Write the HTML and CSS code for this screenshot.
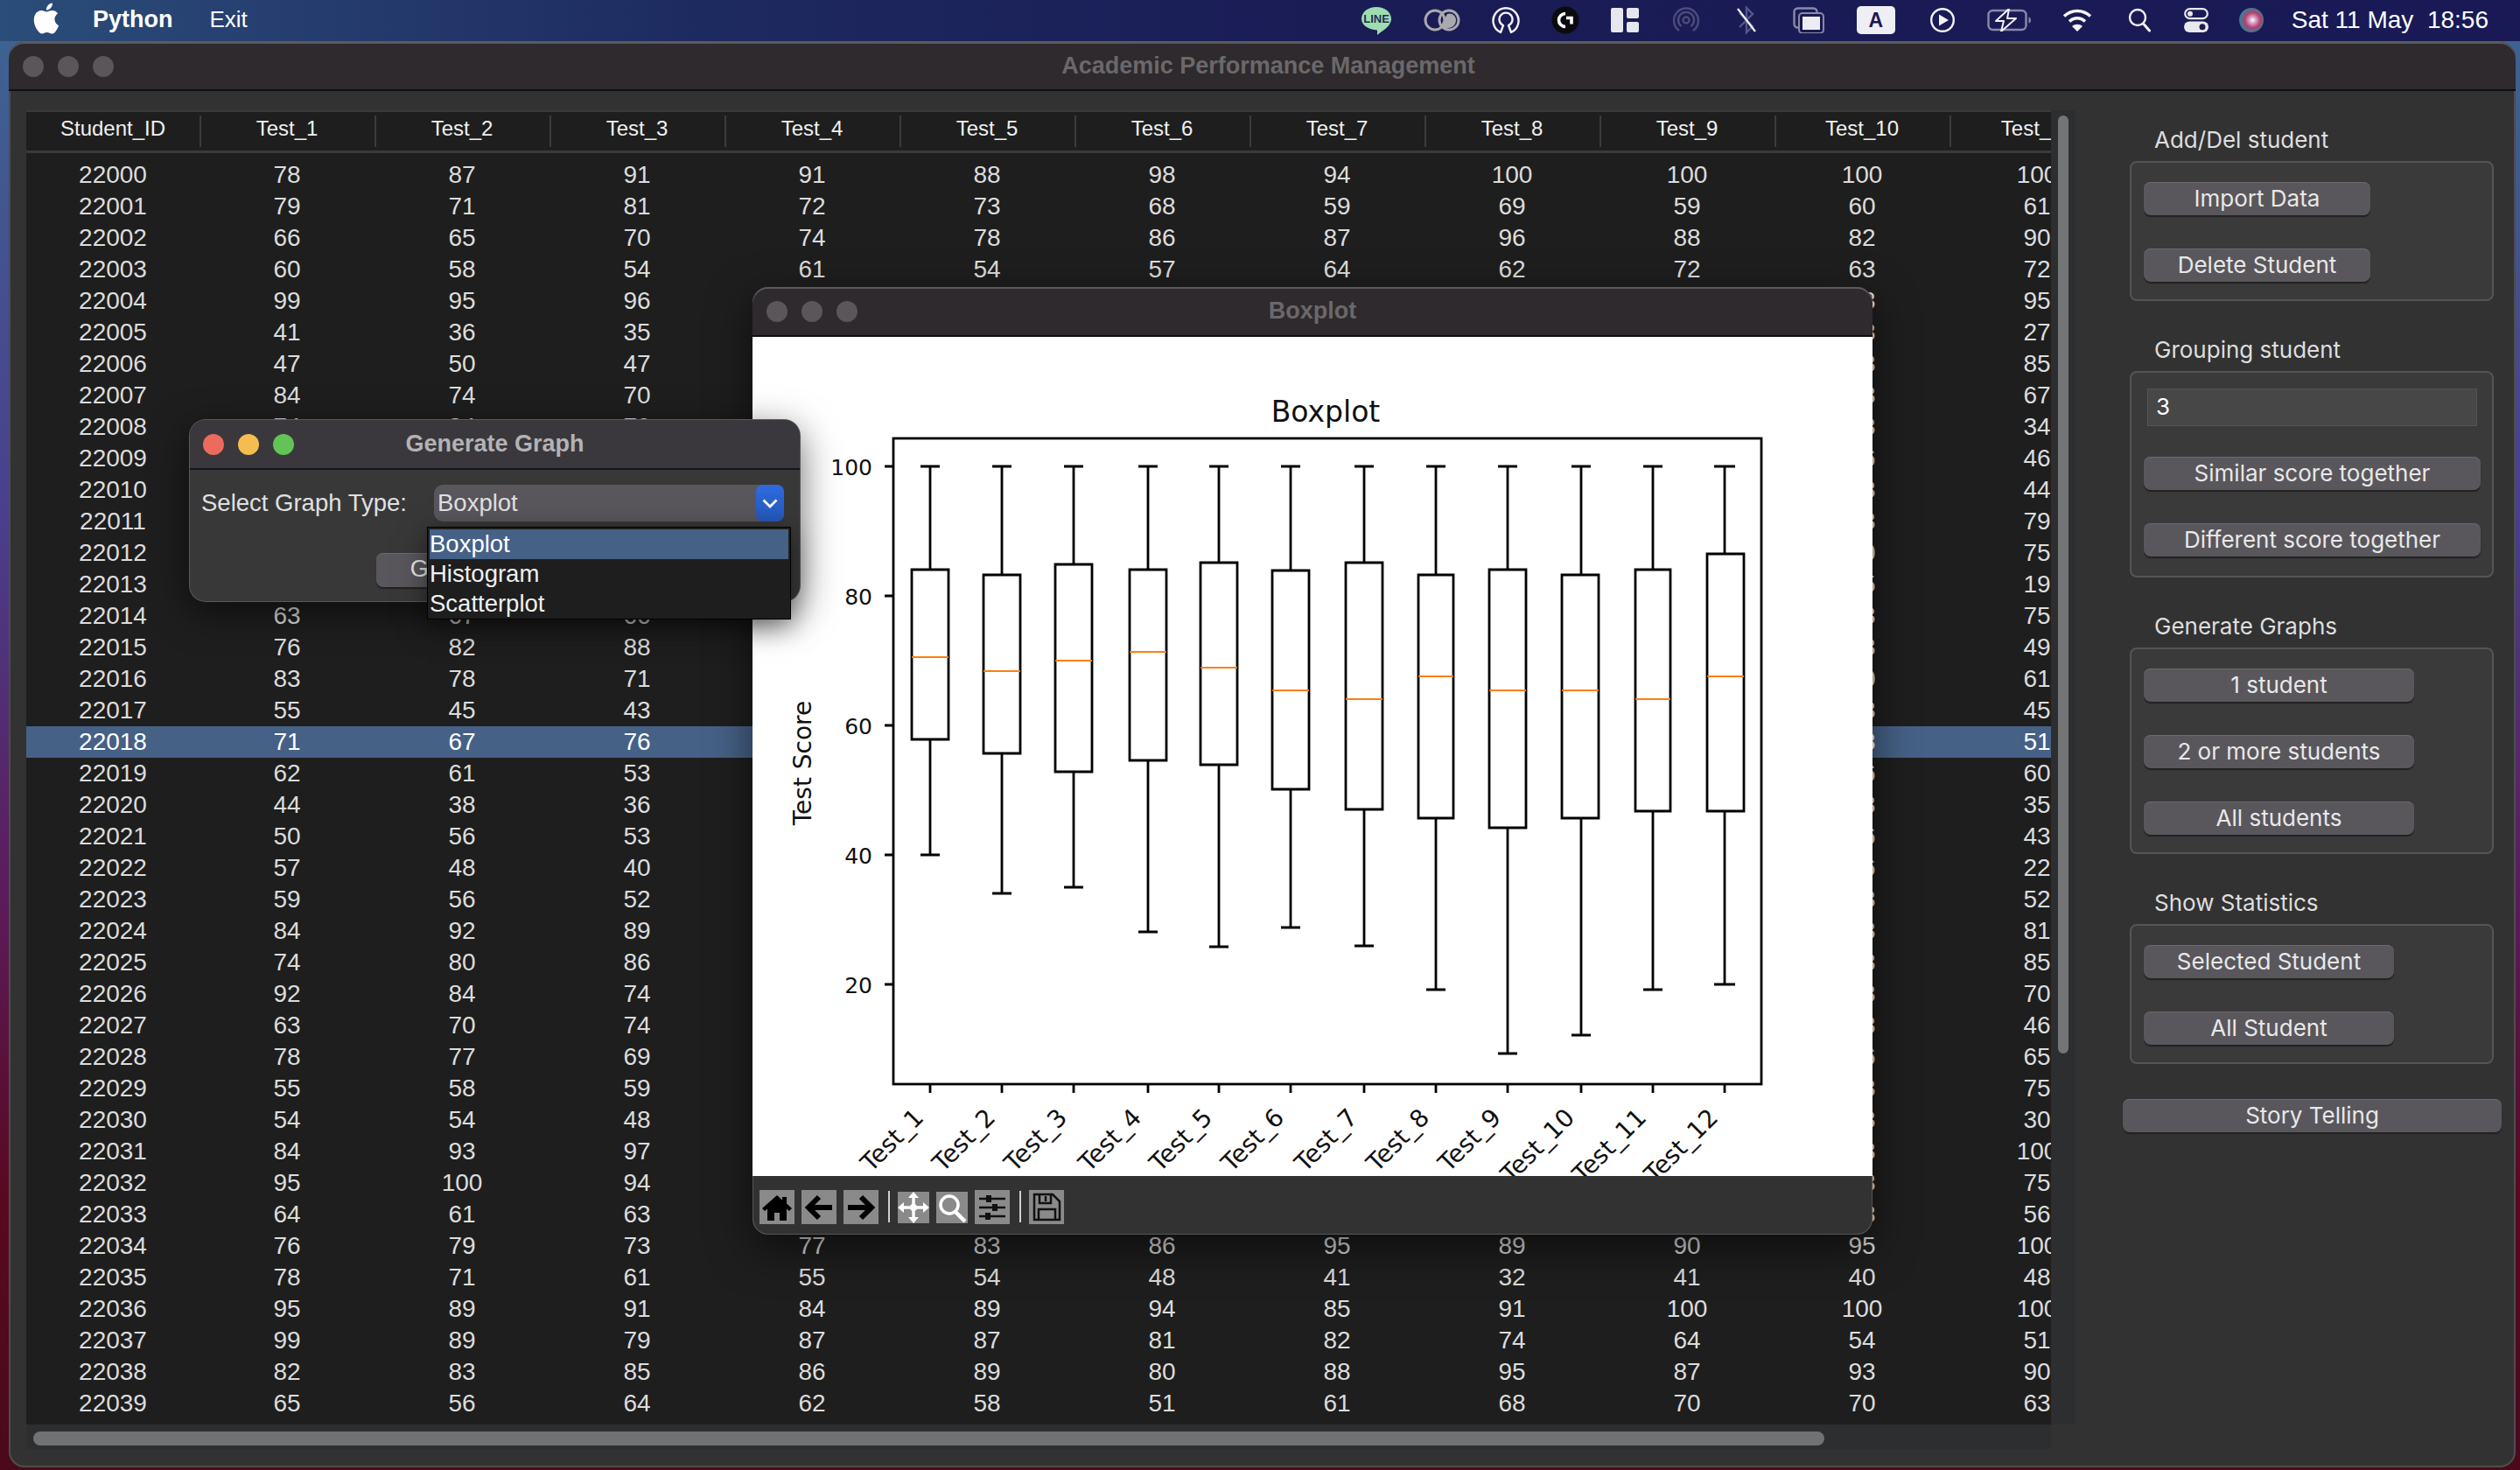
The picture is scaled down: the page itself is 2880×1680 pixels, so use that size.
FILE: index.html
```html
<!DOCTYPE html>
<html lang="en">
<head>
<meta charset="utf-8">
<title>Academic Performance Management</title>
<link rel="stylesheet" href="styles.css">
</head>
<body>
<header class="menubar">
  <svg class="apple" viewBox="0 0 24 24"><path fill="#fff" d="M18.71 19.5c-.83 1.24-1.71 2.45-3.05 2.47-1.34.03-1.77-.79-3.29-.79-1.53 0-2 .77-3.27.82-1.31.05-2.3-1.32-3.14-2.53C4.25 17 2.94 12.45 4.7 9.39c.87-1.52 2.43-2.48 4.12-2.51 1.28-.02 2.5.87 3.29.87.78 0 2.26-1.07 3.8-.91.65.03 2.47.26 3.64 1.98-.09.06-2.17 1.28-2.15 3.81.03 3.02 2.65 4.03 2.68 4.04-.03.07-.42 1.44-1.38 2.83M13 3.5c.73-.83 1.94-1.46 2.94-1.5.13 1.17-.34 2.35-1.04 3.19-.69.85-1.83 1.51-2.95 1.42-.15-1.15.41-2.35 1.05-3.11z"/></svg>
  <span class="menu-app">Python</span>
  <span class="menu-item">Exit</span>
  <div class="status">
    <svg width="36" height="36" viewBox="0 0 36 36"><path fill="#9fdcb0" d="M18 3c9.400 0 17 5.800 17 13.500 0 6.500-6 11.500-13 16l-3 2.500v-5.600C9 29 1 23.800 1 16.500 1 8.800 8.600 3 18 3z"/><text class="line-txt" x="18" y="21" text-anchor="middle">LINE</text></svg>
    <svg width="42" height="32" viewBox="0 0 42 32"><g fill="none" stroke="#a9a9ae" stroke-width="3"><circle cx="13" cy="16" r="11"/><circle cx="29" cy="16" r="11"/></g><path fill="#a9a9ae" d="M18 25 27 9c5-2 10 2 10 7s-4 9-9 9z"/></svg>
    <svg width="32" height="34" viewBox="0 0 32 34"><path fill="none" stroke="#f2f2f6" stroke-width="2.400" stroke-linejoin="round" d="M10 31A14.500 14.500 0 1 1 22 31L19 23A7.500 7.500 0 1 0 13 23Z"/></svg>
    <svg width="32" height="32" viewBox="0 0 32 32"><circle cx="16" cy="16" r="15.500" fill="#0b0b0f"/><path fill="none" stroke="#fff" stroke-width="3.600" d="M16 8.500a7.500 7.500 0 0 0 0 15M17 13.500h6v7"/></svg>
    <svg width="32" height="28" viewBox="0 0 32 28"><g fill="#e6e6ee"><rect width="14" height="28" rx="2"/><rect x="18" width="14" height="12" rx="2"/><rect x="18" y="16" width="14" height="12" rx="2"/></g></svg>
    <svg width="30" height="32" viewBox="0 0 30 32"><g fill="none" stroke="#4c4c7c" stroke-width="2.400"><path d="M7 28A14 14 0 1 1 23 28"/><path d="M9.500 23A9 9 0 1 1 20.500 23"/><circle cx="15" cy="16" r="3.500"/></g></svg>
    <svg width="24" height="34" viewBox="0 0 24 34"><path fill="none" stroke="#55568a" stroke-width="2.400" d="M4 9l15 15-7 7V3l7 7L4 25"/><path stroke="#f2f2f6" stroke-width="2.200" d="M2 4l20 26"/></svg>
    <svg width="36" height="30" viewBox="0 0 36 30"><rect x="1.500" y="1.500" width="26" height="22" rx="4" fill="none" stroke="#8989aa" stroke-width="2.400"/><rect x="7" y="7" width="28" height="23" rx="4" fill="#1a1a50" stroke="#8989aa" stroke-width="2"/><rect x="11" y="11" width="20" height="15" fill="#ececf2"/></svg>
    <span class="input-badge">A</span>
    <svg width="30" height="30" viewBox="0 0 30 30"><circle cx="15" cy="15" r="12.800" fill="none" stroke="#f2f2f6" stroke-width="2.400"/><path fill="#f2f2f6" d="M11 8.500l11 6.500-11 6.500z"/></svg>
    <svg width="52" height="26" viewBox="0 0 52 26"><rect x="1.500" y="2" width="43" height="22" rx="5" fill="none" stroke="#8989aa" stroke-width="2.400"/><path fill="#8989aa" d="M47.500 9.500c2 .6 2.500 2 2.500 3.500s-.5 3-2.500 3.500z"/><path fill="#1a1a50" stroke="#f2f2f6" stroke-width="2" stroke-linejoin="round" d="M25 0L10 14h9l-3 12 17-15h-10z"/></svg>
    <svg width="34" height="28" viewBox="0 0 34 28"><g fill="none" stroke="#f6f6fa" stroke-width="3.600"><path d="M2 9.500C11 1.500 23 1.500 32 9.500"/><path d="M8 15.500c5.500-5 12.500-5 18 0"/></g><path fill="#f6f6fa" d="M17 27l-6-6c3.500-3 8.500-3 12 0z"/></svg>
    <svg width="26" height="28" viewBox="0 0 26 28"><circle cx="11" cy="11" r="9" fill="none" stroke="#f2f2f6" stroke-width="2.400"/><path stroke="#f2f2f6" stroke-width="3" stroke-linecap="round" d="M17.500 18l7 8"/></svg>
    <svg width="28" height="28" viewBox="0 0 28 28"><rect x="1.200" y="1.200" width="25.600" height="11" rx="5.500" fill="none" stroke="#e8e8ee" stroke-width="2.200"/><circle cx="7" cy="6.700" r="3" fill="#e8e8ee"/><rect y="15.500" width="28" height="12.500" rx="6.200" fill="#e8e8ee"/><circle cx="21" cy="21.700" r="3.500" fill="#1a1a50"/></svg>
    <svg width="28" height="28" viewBox="0 0 28 28"><defs><radialGradient id="siri" cx=".55" cy=".5" r=".62"><stop offset="0" stop-color="#fff"/><stop offset=".22" stop-color="#d8a0c8"/><stop offset=".5" stop-color="#b5406e"/><stop offset=".8" stop-color="#3d7d96"/><stop offset="1" stop-color="#3b5f8c"/></radialGradient></defs><circle cx="14" cy="14" r="14" fill="url(#siri)"/></svg>
  </div>
  <time class="clock">Sat 11 May&nbsp; 18:56</time>
</header>

<section class="window main-window">
  <div class="titlebar">
    <div class="lights"><i></i><i></i><i></i></div>
    <h1 class="title main-title">Academic Performance Management</h1>
  </div>
  <div class="main-body">
    <div class="data-area">
      <div class="data-top">
        <div class="table-clip">
          <table class="grades">
            <thead>
              <tr><th>Student_ID<th>Test_1<th>Test_2<th>Test_3<th>Test_4<th>Test_5<th>Test_6<th>Test_7<th>Test_8<th>Test_9<th>Test_10<th>Test_11
            </thead>
            <tbody>
              <tr class="gap"><td colspan="12">
              <tr><td>22000<td>78<td>87<td>91<td>91<td>88<td>98<td>94<td>100<td>100<td>100<td>100
              <tr><td>22001<td>79<td>71<td>81<td>72<td>73<td>68<td>59<td>69<td>59<td>60<td>61
              <tr><td>22002<td>66<td>65<td>70<td>74<td>78<td>86<td>87<td>96<td>88<td>82<td>90
              <tr><td>22003<td>60<td>58<td>54<td>61<td>54<td>57<td>64<td>62<td>72<td>63<td>72
              <tr><td>22004<td>99<td>95<td>96<td colspan="6"><td>93<td>95
              <tr><td>22005<td>41<td>36<td>35<td colspan="6"><td>38<td>27
              <tr><td>22006<td>47<td>50<td>47<td colspan="6"><td>63<td>85
              <tr><td>22007<td>84<td>74<td>70<td colspan="6"><td>68<td>67
              <tr><td>22008<td>74<td>84<td>79<td colspan="6"><td>43<td>34
              <tr><td>22009<td colspan="9"><td>56<td>46
              <tr><td>22010<td colspan="9"><td>48<td>44
              <tr><td>22011<td colspan="9"><td>83<td>79
              <tr><td>22012<td colspan="9"><td>70<td>75
              <tr><td>22013<td colspan="9"><td>25<td>19
              <tr><td>22014<td>63<td>67<td>66<td colspan="6"><td>73<td>75
              <tr><td>22015<td>76<td>82<td>88<td colspan="6"><td>53<td>49
              <tr><td>22016<td>83<td>78<td>71<td colspan="6"><td>60<td>61
              <tr><td>22017<td>55<td>45<td>43<td colspan="6"><td>48<td>45
              <tr class="selected"><td>22018<td>71<td>67<td>76<td colspan="6"><td>58<td>51
              <tr><td>22019<td>62<td>61<td>53<td colspan="6"><td>56<td>60
              <tr><td>22020<td>44<td>38<td>36<td colspan="6"><td>33<td>35
              <tr><td>22021<td>50<td>56<td>53<td colspan="6"><td>46<td>43
              <tr><td>22022<td>57<td>48<td>40<td colspan="6"><td>26<td>22
              <tr><td>22023<td>59<td>56<td>52<td colspan="6"><td>53<td>52
              <tr><td>22024<td>84<td>92<td>89<td colspan="6"><td>83<td>81
              <tr><td>22025<td>74<td>80<td>86<td colspan="6"><td>88<td>85
              <tr><td>22026<td>92<td>84<td>74<td colspan="6"><td>73<td>70
              <tr><td>22027<td>63<td>70<td>74<td colspan="6"><td>48<td>46
              <tr><td>22028<td>78<td>77<td>69<td colspan="6"><td>66<td>65
              <tr><td>22029<td>55<td>58<td>59<td colspan="6"><td>73<td>75
              <tr><td>22030<td>54<td>54<td>48<td colspan="6"><td>33<td>30
              <tr><td>22031<td>84<td>93<td>97<td colspan="6"><td>98<td>100
              <tr><td>22032<td>95<td>100<td>94<td colspan="6"><td>78<td>75
              <tr><td>22033<td>64<td>61<td>63<td colspan="6"><td>58<td>56
              <tr><td>22034<td>76<td>79<td>73<td>77<td>83<td>86<td>95<td>89<td>90<td>95<td>100
              <tr><td>22035<td>78<td>71<td>61<td>55<td>54<td>48<td>41<td>32<td>41<td>40<td>48
              <tr><td>22036<td>95<td>89<td>91<td>84<td>89<td>94<td>85<td>91<td>100<td>100<td>100
              <tr><td>22037<td>99<td>89<td>79<td>87<td>87<td>81<td>82<td>74<td>64<td>54<td>51
              <tr><td>22038<td>82<td>83<td>85<td>86<td>89<td>80<td>88<td>95<td>87<td>93<td>90
              <tr><td>22039<td>65<td>56<td>64<td>62<td>58<td>51<td>61<td>68<td>70<td>70<td>63
            </tbody>
          </table>
        </div>
        <div class="vtrack"><div class="vthumb"></div></div>
      </div>
      <div class="htrack"><div class="hthumb"></div></div>
    </div>

    <aside class="panel">
      <div class="group">
        <h2 class="group-title">Add/Del student</h2>
        <div class="group-box w-add">
          <button class="btn">Import Data</button>
          <button class="btn">Delete Student</button>
        </div>
      </div>
      <div class="group">
        <h2 class="group-title">Grouping student</h2>
        <div class="group-box w-grouping">
          <input class="field" type="text" value="3">
          <button class="btn">Similar score together</button>
          <button class="btn">Different score together</button>
        </div>
      </div>
      <div class="group">
        <h2 class="group-title">Generate Graphs</h2>
        <div class="group-box w-graphs">
          <button class="btn">1 student</button>
          <button class="btn">2 or more students</button>
          <button class="btn">All students</button>
        </div>
      </div>
      <div class="group">
        <h2 class="group-title">Show Statistics</h2>
        <div class="group-box w-stats">
          <button class="btn">Selected Student</button>
          <button class="btn">All Student</button>
        </div>
      </div>
      <button class="btn story">Story Telling</button>
    </aside>
  </div>
</section>

<section class="window plot-window">
  <div class="titlebar plot-bar">
    <div class="lights"><i></i><i></i><i></i></div>
    <h1 class="title">Boxplot</h1>
  </div>
  <svg class="canvas" viewBox="860 385 1280 959" width="1280" height="959">
    <g class="ax" fill="none" stroke="#000" stroke-width="2.800">
      <rect x="1021" y="501" width="992" height="738"/>
      <path d="M1011 533h10M1011 681h10M1011 829h10M1011 977h10M1011 1125h10"/>
      <path d="M1063 1239v10M1145 1239v10M1227 1239v10M1312 1239v10M1393 1239v10M1475 1239v10M1559 1239v10M1641 1239v10M1723 1239v10M1807 1239v10M1889 1239v10M1971 1239v10"/>
      <path d="M1063 533V651M1063 845V977M1052 533h22M1052 977h22M1042 651h42V845h-42Z"/>
      <path d="M1145 533V657M1145 861V1021M1134 533h22M1134 1021h22M1124 657h42V861h-42Z"/>
      <path d="M1227 533V645M1227 882V1014M1216 533h22M1216 1014h22M1206 645h42V882h-42Z"/>
      <path d="M1312 533V651M1312 869V1065M1301 533h22M1301 1065h22M1291 651h42V869h-42Z"/>
      <path d="M1393 533V643M1393 874V1082M1382 533h22M1382 1082h22M1372 643h42V874h-42Z"/>
      <path d="M1475 533V652M1475 902V1060M1464 533h22M1464 1060h22M1454 652h42V902h-42Z"/>
      <path d="M1559 533V643M1559 925V1081M1548 533h22M1548 1081h22M1538 643h42V925h-42Z"/>
      <path d="M1641 533V657M1641 935V1131M1630 533h22M1630 1131h22M1621 657h40V935h-40Z"/>
      <path d="M1723 533V651M1723 946V1204M1712 533h22M1712 1204h22M1702 651h42V946h-42Z"/>
      <path d="M1807 533V657M1807 935V1183M1796 533h22M1796 1183h22M1785 657h42V935h-42Z"/>
      <path d="M1889 533V651M1889 927V1131M1878 533h22M1878 1131h22M1869 651h40V927h-40Z"/>
      <path d="M1971 533V633M1971 927V1125M1959 533h24M1959 1125h24M1951 633h42V927h-42Z"/>
    </g>
    <path fill="none" stroke="#ff7f0e" stroke-width="2.200" d="M1042 751h42M1124 767h42M1206 755h42M1291 745h42M1372 763h42M1454 789h42M1538 799h42M1621 773h40M1702 789h42M1785 789h42M1869 799h40M1951 773h42"/>
    <text class="plot-title" x="1515" y="482" text-anchor="middle">Boxplot</text>
    <g class="tick-text" text-anchor="end">
      <text x="997" y="543">100</text><text x="997" y="691">80</text><text x="997" y="839">60</text><text x="997" y="987">40</text><text x="997" y="1135">20</text>
    </g>
    <g class="plot-text" text-anchor="end">
      <text transform="translate(1057 1279) rotate(-45)">Test_1</text>
      <text transform="translate(1139 1279) rotate(-45)">Test_2</text>
      <text transform="translate(1221 1279) rotate(-45)">Test_3</text>
      <text transform="translate(1306 1279) rotate(-45)">Test_4</text>
      <text transform="translate(1387 1279) rotate(-45)">Test_5</text>
      <text transform="translate(1469 1279) rotate(-45)">Test_6</text>
      <text transform="translate(1553 1279) rotate(-45)">Test_7</text>
      <text transform="translate(1635 1279) rotate(-45)">Test_8</text>
      <text transform="translate(1717 1279) rotate(-45)">Test_9</text>
      <text transform="translate(1801 1279) rotate(-45)">Test_10</text>
      <text transform="translate(1883 1279) rotate(-45)">Test_11</text>
      <text transform="translate(1965 1279) rotate(-45)">Test_12</text>
    </g>
    <text class="plot-text" text-anchor="middle" transform="translate(927 872) rotate(-90)">Test Score</text>
  </svg>
  <div class="toolbar">
    <svg class="tool" width="40" height="39" viewBox="0 0 40 39"><rect width="40" height="39" fill="#8a8a8a"/><path fill="#000" d="M20 6 3 21l3 3 3-2.500V35h8v-9h6v9h8V21.500l3 2.500 3-3-6-5.500V8h-5v3.500z"/></svg>
    <svg class="tool" width="40" height="39" viewBox="0 0 40 39"><rect width="40" height="39" fill="#8a8a8a"/><path fill="none" stroke="#000" stroke-width="6" d="M35 20H10M20 8 8 20l12 12"/></svg>
    <svg class="tool" width="40" height="39" viewBox="0 0 40 39"><rect width="40" height="39" fill="#8a8a8a"/><path fill="none" stroke="#000" stroke-width="6" d="M5 20h25M20 8l12 12-12 12"/></svg>
    <span class="tool-sep"></span>
    <svg class="tool tool-small" width="36" height="36" viewBox="0 0 36 36"><rect width="36" height="36" fill="#8a8a8a"/><path fill="none" stroke="#fff" stroke-width="3.500" d="M18 4v28M2 18h32"/><path fill="#fff" d="M18 0l6 7H12zM18 36l-6-7h12zM0 18l7-6v12zM36 18l-7 6V12z"/><circle cx="18" cy="18" r="4" fill="#fff"/></svg>
    <svg class="tool tool-small" width="36" height="36" viewBox="0 0 36 36"><rect width="36" height="36" fill="#8a8a8a"/><circle cx="15" cy="15" r="10" fill="none" stroke="#fff" stroke-width="3.500"/><path stroke="#fff" stroke-width="4.500" d="M22 23l11 11"/></svg>
    <svg class="tool" width="40" height="39" viewBox="0 0 40 39"><rect width="40" height="39" fill="#8a8a8a"/><path stroke="#111" stroke-width="2.500" d="M5 10h30M5 20h30M5 30h30"/><g fill="#111"><rect x="13" y="6" width="6" height="8"/><rect x="20" y="16" width="6" height="8"/><rect x="12" y="26" width="6" height="8"/></g></svg>
    <span class="tool-sep"></span>
    <svg class="tool" width="40" height="39" viewBox="0 0 40 39"><rect width="40" height="39" fill="#8a8a8a"/><path fill="none" stroke="#111" stroke-width="2.500" d="M6 5h21l8 8v21H6zM12 5v10h13V5M19 7v6M11 34V22h19v12"/></svg>
  </div>
</section>

<section class="window dialog">
  <div class="titlebar dialog-bar">
    <div class="lights active"><i class="red"></i><i class="amber"></i><i class="green"></i></div>
    <h1 class="title dialog-title">Generate Graph</h1>
  </div>
  <div class="dialog-body">
    <div class="select-row">
      <label class="select-label">Select Graph Type:</label>
      <div class="combo">
        <span class="combo-value">Boxplot</span>
        <span class="combo-arrow"><svg width="18" height="11" viewBox="0 0 18 11"><path fill="none" stroke="#fff" stroke-width="2.800" d="M1.500 1.500 9 9l7.500-7.500"/></svg></span>
      </div>
    </div>
    <button class="btn generate">Generate</button>
  </div>
  <ul class="dropdown">
    <li class="picked">Boxplot</li>
    <li>Histogram</li>
    <li>Scatterplot</li>
  </ul>
</section>
</body>
</html>
```

FILE: styles.css
```css
* { box-sizing: border-box; }
html, body { margin: 0; padding: 0; }
body {
  width: 2880px;
  height: 1680px;
  overflow: hidden;
  position: relative;
  background: linear-gradient(180deg, #3d6592 0, #4a3f8c 35%, #5c1a58 62%, #57091f 82%, #4a0a1c 100%);
  font-family: "Liberation Sans", Arial, sans-serif;
}

/* Menu bar */
.menubar {
  height: 47px;
  display: flex;
  align-items: center;
  padding: 0 36px 2px 0;
  color: #fff;
  background: linear-gradient(90deg, #2a4d79 0, #263f70 300px, #1d2a60 800px, #1a1c56 1500px, #191a55 100%);
}
.apple { width: 42px; height: 42px; margin-left: 32px; margin-top: -4px; }
.menu-app { font-weight: 700; font-size: 27px; margin-left: 32px; }
.menu-item { font-size: 26px; margin-left: 42px; }
.status {
  margin-left: auto;
  display: grid;
  grid-template-columns: 75px 75px 70px 66px 70px 70px 68px 75px 78px 75px 78px 76px 67px 63px 62px;
  justify-items: center;
  align-items: center;
}
.line-txt { font: 700 13px "Liberation Sans", sans-serif; fill: #1d2f52; }
.input-badge {
  width: 44px; height: 32px;
  border-radius: 5px;
  background: #eeeef4;
  color: #1a1a50;
  font-weight: 700;
  font-size: 23px;
  line-height: 32px;
  text-align: center;
}
.clock { font-size: 28px; margin-left: 15px; white-space: nowrap; }

/* Windows */
.window { position: absolute; border-radius: 18px; }
.titlebar {
  position: relative;
  height: 56px;
  display: flex;
  align-items: center;
  justify-content: center;
  background: #2e2a2d;
  border-bottom: 2px solid #0f0f0f;
  border-radius: 18px 18px 0 0;
  box-shadow: inset 0 2px 0 #5c5a5c;
}
.title {
  margin: 0;
  font-size: 27px;
  font-weight: 700;
  color: #6b686a;
}
.lights {
  position: absolute;
  left: 16px;
  top: 16px;
  display: flex;
  gap: 16px;
}
.lights i { width: 24px; height: 24px; border-radius: 50%; background: #5a565a; }
.lights .red { background: #ee6a5e; }
.lights .amber { background: #f5bd4f; }
.lights .green { background: #61c454; }

.main-window {
  left: 10px;
  top: 48px;
  width: 2865px;
  height: 1629px;
  background: #323232;
  box-shadow: inset 0 0 0 2px #4d4d4d;
}
.main-title { padding-left: 14px; }
.main-body { display: flex; padding: 22px 0 0 20px; }
.data-area { width: 2342px; }
.data-top { display: flex; height: 1502px; }
.table-clip { width: 2314px; overflow: hidden; background: #1e1e1e; }
.vtrack { width: 28px; background: #2d2e30; padding: 6px 8px 0; }
.vthumb { height: 1072px; border-radius: 8px; background: #737577; }
.htrack { width: 2314px; height: 28px; background: #2d2e30; padding: 8px 8px 0; }
.hthumb { width: 2047px; height: 16px; border-radius: 8px; background: #707274; }

/* Table */
.grades {
  table-layout: fixed;
  border-collapse: collapse;
  width: 2398px;
  color: #dcdcdc;
}
.grades th {
  width: 200px;
  height: 46px;
  padding: 0 0 6px;
  font-size: 24px;
  font-weight: 400;
  color: #f0f0f0;
  border-top: 2px solid #3a3a3a;
  border-bottom: 3px solid #3a3a3a;
  background: linear-gradient(#3c3c3c, #3c3c3c) left center / 2px 36px no-repeat;
}
.grades th:first-child { width: 198px; background: none; }
.grades td {
  height: 36px;
  padding: 0;
  font-size: 28px;
  line-height: 36px;
  text-align: center;
  white-space: nowrap;
}
.grades .gap td { height: 9px; line-height: 9px; font-size: 0; }
.grades .selected td { background: #456186; color: #fff; }

/* Side panel */
.panel {
  width: 503px;
  padding: 14px 0 0 62px;
  display: flex;
  flex-direction: column;
  gap: 36px;
  font-family: Inter, "Liberation Sans", sans-serif;
}
.group-title {
  margin: 0 0 4px 28px;
  height: 40px;
  line-height: 40px;
  font-size: 26px;
  font-weight: 400;
  color: #dedede;
}
.group-box {
  width: 416px;
  display: flex;
  flex-direction: column;
  align-items: flex-start;
  gap: 38px;
  padding: 22px 14px 20px;
  background: #3a3a3a;
  border: 2px solid #555;
  border-radius: 8px;
}
.btn {
  height: 38px;
  padding: 0 0 2px;
  border: 0;
  border-radius: 8px;
  background: #59575c;
  color: #e8e8e8;
  font: 400 26px Inter, "Liberation Sans", sans-serif;
  box-shadow: inset 0 1px 0 #6c6a6f, 0 2px 1px #222;
}
.w-add .btn { width: 259px; }
.w-grouping { padding-bottom: 22px; }
.w-grouping .btn { width: 385px; }
.w-graphs .btn { width: 309px; }
.w-stats .btn { width: 286px; }
.field {
  width: 377px;
  height: 43px;
  margin: -4px 0 -3px 4px;
  padding: 0 0 2px 9px;
  border: 1px solid #545454;
  background: #474747;
  color: #fff;
  font: 400 26px Inter, "Liberation Sans", sans-serif;
}
.story { width: 433px; margin: 4px 0 0 -8px; }

/* Plot window */
.plot-window {
  left: 860px;
  top: 328px;
  width: 1280px;
  height: 1083px;
  background: #323232;
  box-shadow: 0 16px 50px rgba(0,0,0,.55), inset 0 0 0 1px #555;
}
.plot-bar { height: 57px; }
.canvas { display: block; background: #fff; }
.plot-title { font: 33px "DejaVu Sans", sans-serif; fill: #111; }
.tick-text { font: 25px "DejaVu Sans", sans-serif; fill: #111; }
.plot-text { font: 28px "DejaVu Sans", sans-serif; fill: #111; }
.toolbar {
  height: 67px;
  display: flex;
  align-items: flex-start;
  gap: 8px;
  padding: 16px 0 0 8px;
}
.tool { display: block; }
.tool-small { margin-top: 2px; }
.tool-sep { width: 2px; height: 36px; margin: 1px 1px 0 3px; background: #cfcfcf; }

/* Dialog */
.dialog {
  left: 217px;
  top: 480px;
  width: 697px;
  height: 207px;
  background: #383838;
  box-shadow: 0 0 0 1px #5a5a5a, 0 12px 44px rgba(0,0,0,.6);
  color: #e0e0e0;
}
.dialog-bar { height: 57px; background: #3a383c; box-shadow: none; border-bottom-color: #161616; }
.dialog-title { color: #b4b2b5; }
.dialog-bar .lights { left: 15px; top: 16px; }
.dialog-body { padding: 17px 0 0 13px; }
.select-row { display: flex; align-items: center; gap: 34px; }
.select-label { width: 232px; font-size: 27.500px; white-space: nowrap; }
.combo {
  width: 400px;
  height: 42px;
  display: flex;
  justify-content: space-between;
  align-items: center;
  padding-left: 4px;
  border-radius: 10px;
  background: #59565c;
  font-size: 27.500px;
}
.combo-arrow {
  width: 32px;
  height: 42px;
  display: flex;
  align-items: center;
  justify-content: center;
  border-radius: 8px;
  background: linear-gradient(#2f6ae0, #2458b8);
}
.generate {
  display: block;
  width: 190px;
  height: 39px;
  margin: 36px 0 0 200px;
  font: 400 27px "Liberation Sans", sans-serif;
}
.dropdown {
  position: absolute;
  left: 271px;
  top: 122px;
  width: 416px;
  height: 106px;
  margin: 0;
  padding: 2px;
  list-style: none;
  background: #1e1e1e;
  border: 1px solid #000;
  box-shadow: 0 8px 30px rgba(0,0,0,.5);
  font-size: 27.500px;
  color: #f0f0f0;
}
.dropdown li { height: 34px; line-height: 34px; }
.dropdown .picked { background: #456186; color: #fff; }
```
